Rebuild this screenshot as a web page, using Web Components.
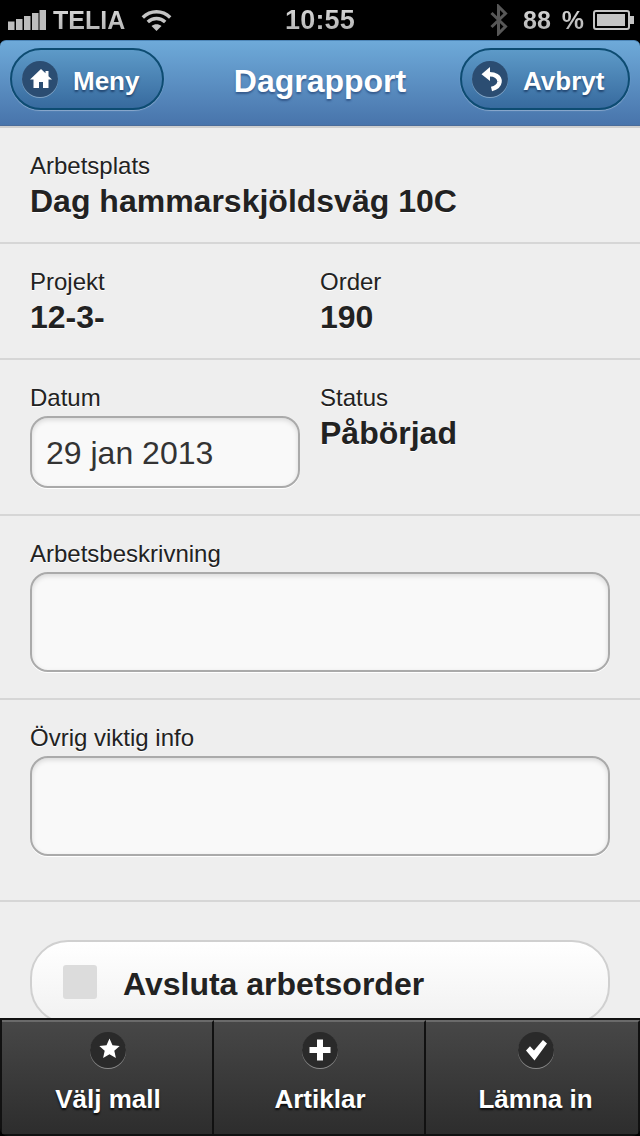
<!DOCTYPE html>
<html lang="sv"><head><meta charset="utf-8"><title>Dagrapport</title>
<style>
html,body{margin:0;padding:0;background:#000}
body{width:640px;height:1136px;overflow:hidden;font-family:"Liberation Sans",Arial,sans-serif;color:#222}
x-app{display:flex}
</style></head><body>
<template id="t-app"><style>
:host{display:flex;flex-direction:column;width:640px;height:1136px;overflow:hidden;background:#000}
main{flex:1;min-height:0;overflow:hidden;background:#eee}
</style><slot name="status"></slot><slot name="header"></slot><main><slot></slot></main><slot name="footer"></slot></template>

<x-app id="app">
<x-status slot="status"></x-status>
<x-header slot="header">
  <x-navbtn slot="left" label="Meny" icon="home" width="154"></x-navbtn>
  <span>Dagrapport</span>
  <x-navbtn slot="right" label="Avbryt" icon="back" width="170"></x-navbtn>
</x-header>

<x-section h="116"><x-field label="Arbetsplats" value="Dag hammarskjöldsväg 10C"></x-field></x-section>
<x-section h="116" cols>
  <x-field label="Projekt" value="12-3-"></x-field>
  <x-field label="Order" value="190"></x-field>
</x-section>
<x-section h="156" cols>
  <x-field label="Datum"><x-input h="72" text="29 jan 2013"></x-input></x-field>
  <x-field label="Status" value="Påbörjad"></x-field>
</x-section>
<x-section h="184"><x-field label="Arbetsbeskrivning"><x-input h="100"></x-input></x-field></x-section>
<x-section h="202"><x-field label="Övrig viktig info"><x-input h="100"></x-input></x-field></x-section>
<x-check label="Avsluta arbetsorder"></x-check>

<x-footer slot="footer">
  <x-tab label="Välj mall" icon="star" style="width:212px;padding-left:2px"></x-tab>
  <x-tab label="Artiklar" icon="plus" style="width:212px;padding-left:2px"></x-tab>
  <x-tab label="Lämna in" icon="check" style="flex:1;padding-left:7px"></x-tab>
</x-footer>
</x-app>

<script>
const ICONS={
home:'<path d="M19 8 8 18.500h3.500V27H17v-6h4v6h5.500v-8.500H30l-3.500-3.300V10h-3v2.300z" fill="#fff"/>',
back:'<path d="M18 6 9.500 13.300 18 20z" fill="#fff"/><path d="M15 13.500C23 12.500 28 16 27.500 21 27 25 23.500 27 19.500 28" fill="none" stroke="#fff" stroke-width="4.500"/>',
star:'<path d="M19.500 6.500l3 6.800 7.200.7-5.400 4.800 1.600 7.200-6.400-3.800-6.400 3.800 1.600-7.200L9.300 14l7.200-.7z" fill="#fff"/>',
plus:'<path d="M15 7.500h6V15h7.500v6H21v7.500h-6V21H7.500v-6H15z" fill="#fff"/>',
check:'<path d="M8 18.500l4-4.200 4 4.300L25 8l4 3.400L16.500 28.500z" fill="#fff"/>'
};
function def(name,fn){customElements.define(name,class extends HTMLElement{connectedCallback(){if(this.shadowRoot)return;const r=this.attachShadow({mode:'open'});r.innerHTML=fn(this);}});}
customElements.define('x-app',class extends HTMLElement{constructor(){super();this.attachShadow({mode:'open'}).appendChild(document.getElementById('t-app').content.cloneNode(true));}});

def('x-status',()=>`<style>
:host{display:flex;align-items:center;height:40px;background:#000;color:#c4c4c4;font-weight:700;position:relative;flex:none;padding:0 6px 0 8px;box-sizing:border-box;font-family:"Liberation Sans",Arial,sans-serif}
svg{display:block;flex:none}
.t{font-size:25px;line-height:38px;background:linear-gradient(#e2e2e2,#a8a8a8);-webkit-background-clip:text;background-clip:text;color:transparent}
.clock{position:absolute;left:0;right:0;text-align:center;font-size:27px;letter-spacing:.2px}
.sp{flex:1}
</style>
<svg style="margin-top:-1px" width="38" height="20" viewBox="0 0 38 20" fill="#bdbdbd"><rect y="11.500" width="6.500" height="8.500"/><rect x="8" y="9" width="6.500" height="11"/><rect x="16" y="6" width="6.500" height="14"/><rect x="24" y="3" width="6.500" height="17"/><rect x="31.500" y="0" width="6.500" height="20"/></svg>
<span class="t" style="margin-left:7px">TELIA</span>
<svg style="margin-left:16px;margin-top:-1px" width="31" height="24" viewBox="0 0 31 24" fill="none" stroke="#c4c4c4" stroke-width="3.400"><path d="M1.800 9.500C9.500 1.800 21.500 1.800 29.200 9.500"/><path d="M6.800 14C11.800 9.300 19.200 9.300 24.200 14"/><path d="M15.500 23l-5-5c3-2.500 7-2.500 10 0z" fill="#c4c4c4" stroke="none"/></svg>
<span class="t clock">10:55</span>
<span class="sp"></span>
<svg width="18" height="32" viewBox="0 0 18 32" fill="none" stroke="#575757" stroke-width="3"><path d="M1.500 9 15.500 22.500 8.500 29.500V2.500L15.500 9.500 1.500 23"/></svg>
<span class="t" style="margin-left:15px;word-spacing:4px">88 %</span>
<svg style="margin-left:9px;margin-top:-1px" width="41" height="20" viewBox="0 0 41 20"><rect x="1" y="1" width="35" height="18" rx="2" fill="none" stroke="#c4c4c4" stroke-width="2"/><rect x="4" y="4" width="28" height="12" fill="#c4c4c4"/><rect x="37" y="6" width="4" height="8" fill="#c4c4c4"/></svg>`);

def('x-header',()=>`<style>
:host{display:flex;flex:none;align-items:flex-start;justify-content:space-between;box-sizing:border-box;height:88px;padding:8px 10px 0;position:relative;background:#000}
.bg{position:absolute;inset:0 0 2px;border-radius:6px 6px 0 0;background:linear-gradient(#6eaad9,#4874ab);border-top:1px solid #4d86b8;border-bottom:1px solid #4a6c9a;box-sizing:border-box}
.line{position:absolute;left:0;right:0;bottom:0;height:2px;background:#cfcfcf}
.t{position:absolute;left:0;right:0;top:23px;text-align:center;font:700 32px/36px "Liberation Sans",Arial,sans-serif;color:#fff;text-shadow:0 2px 2px rgba(30,60,110,.6)}
::slotted(x-navbtn){position:relative}
</style><div class="bg"></div><div class="line"></div><slot name="left"></slot><div class="t"><slot></slot></div><slot name="right"></slot>`);

def('x-navbtn',e=>`<style>
:host{display:block;flex:none}
.b{display:flex;align-items:center;box-sizing:border-box;width:${e.getAttribute('width')}px;height:62px;border-radius:31px;border:2px solid #0d4c72;background:linear-gradient(#5d9ac8,#376a9e);box-shadow:0 1px 1px rgba(255,255,255,.35);padding-left:10px;color:#fff;font:700 26px/30px "Liberation Sans",Arial,sans-serif;text-shadow:0 2px 2px rgba(20,50,90,.7)}
.i{width:36px;height:36px;border-radius:50%;background:#2b4d72;box-shadow:0 1px 0 rgba(255,255,255,.35);flex:none}
svg{display:block;width:36px;height:36px}
span{margin-left:15px;padding-top:3px}
</style><div class="b"><div class="i"><svg viewBox="0 0 36 36">${ICONS[e.getAttribute('icon')]}</svg></div><span>${e.getAttribute('label')}</span></div>`);

def('x-section',e=>`<style>
:host{display:block;box-sizing:border-box;height:${e.getAttribute('h')}px;padding:24px 30px 0;border-bottom:2px solid #d6d6d6}
.w{display:${e.hasAttribute('cols')?'grid':'block'};grid-template-columns:270px 1fr;column-gap:20px}
</style><div class="w"><slot></slot></div>`);

def('x-field',e=>{const v=e.getAttribute('value');return `<style>
:host{display:block;color:#222}
.l{font:400 24px/28px "Liberation Sans",Arial,sans-serif;text-shadow:0 1px 0 #fff}
.v{font:700 32px/38px "Liberation Sans",Arial,sans-serif;text-shadow:0 1px 0 #fff;margin-top:2px}
.s{margin-top:4px}
</style><div class="l">${e.getAttribute('label')}</div>${v?`<div class="v">${v}</div>`:'<div class="s"><slot></slot></div>'}`});

def('x-input',e=>`<style>
:host{display:block}
.i{box-sizing:border-box;height:${e.getAttribute('h')}px;border:2px solid #aaa;border-radius:18px;background:#f9f9f9;box-shadow:inset 0 2px 5px rgba(0,0,0,.13),0 1px 0 #fff;padding:1px 0 0 14px;font:400 32px/${e.getAttribute('h')-4}px "Liberation Sans",Arial,sans-serif;color:#333}
</style><div class="i">${e.getAttribute('text')||''}</div>`);

def('x-check',e=>`<style>
:host{display:block;padding:38px 30px 0}
.c{display:flex;align-items:center;box-sizing:border-box;height:84px;border:2px solid #d0d0d0;border-radius:38px;background:linear-gradient(#fff,#f1f1f1);padding-left:31px;font:700 32px/38px "Liberation Sans",Arial,sans-serif;color:#222}
i{display:block;width:34px;height:34px;background:#dcdcdc;border-radius:3px;margin-right:26px;flex:none}
span{padding-top:3px}
</style><div class="c"><i></i><span>${e.getAttribute('label')}</span></div>`);

def('x-footer',()=>`<style>
:host{display:flex;flex:none;height:118px;box-sizing:border-box;margin-top:-2px;position:relative;background:#111;border-top:2px solid #111;padding:0 0 0 2px;border-radius:0 0 8px 8px;overflow:hidden}
</style><slot></slot>`);

def('x-tab',e=>`<style>
:host{display:flex;flex-direction:column;align-items:center;box-sizing:border-box;border-top:2px solid #6a6a6a;border-right:2px solid #111;background:linear-gradient(#474747,#2d2d2d);height:114px}
.i{width:36px;height:36px;border-radius:50%;background:#2a2a2a;box-shadow:0 1px 0 rgba(255,255,255,.4);margin-top:10px}
svg{display:block;width:36px;height:36px}
.l{margin-top:15px;font:700 26px/32px "Liberation Sans",Arial,sans-serif;color:#fff;text-shadow:0 2px 2px rgba(0,0,0,.8)}
</style><div class="i"><svg viewBox="0 0 36 36">${ICONS[e.getAttribute('icon')]}</svg></div><div class="l">${e.getAttribute('label')}</div>`);
</script>
</body></html>
